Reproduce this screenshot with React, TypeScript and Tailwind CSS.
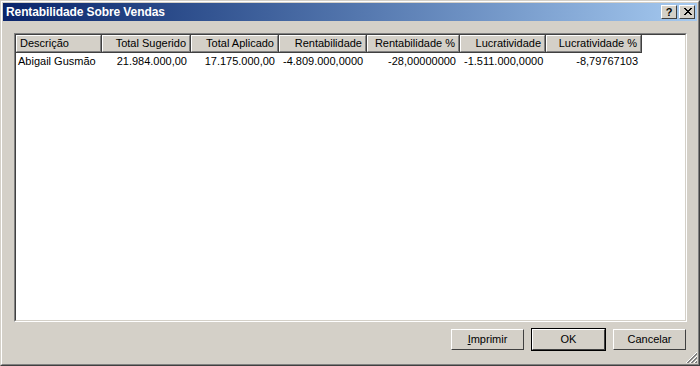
import React from "react";

const cols = [
  { label: "Descrição", w: 86, align: "left" },
  { label: "Total Sugerido", w: 89, align: "right" },
  { label: "Total Aplicado", w: 88, align: "right" },
  { label: "Rentabilidade", w: 88, align: "right" },
  { label: "Rentabilidade %", w: 93, align: "right" },
  { label: "Lucratividade", w: 86, align: "right" },
  { label: "Lucratividade %", w: 96, align: "right" },
];

const row = [
  "Abigail Gusmão",
  "21.984.000,00",
  "17.175.000,00",
  "-4.809.000,0000",
  "-28,00000000",
  "-1.511.000,0000",
  "-8,79767103",
];

function TitleButton({ children }: { children: React.ReactNode }) {
  return (
    <div className="w-[16px] h-[14px] bg-[#d4d0c8] border border-t-white border-l-white border-r-[#404040] border-b-[#404040] flex items-center justify-center text-black font-bold text-[11px] leading-none">
      {children}
    </div>
  );
}

function Button({ children, isDefault }: { children: React.ReactNode; isDefault?: boolean }) {
  return (
    <div className={isDefault ? "border border-black" : "border border-transparent"}>
      <div className="w-[73px] h-[21px] bg-[#d4d0c8] border border-t-white border-l-white border-r-[#404040] border-b-[#404040] flex items-center justify-center text-[11px] text-black">
        {children}
      </div>
    </div>
  );
}

export default function App() {
  return (
    <div
      className="w-[700px] h-[366px] bg-[#d4d0c8] border border-t-[#d4d0c8] border-l-[#d4d0c8] border-r-[#404040] border-b-[#404040] text-black"
      style={{ fontFamily: '"Liberation Sans", Arial, sans-serif' }}
    >
      <div className="h-full border border-t-white border-l-white border-r-[#808080] border-b-[#808080] p-[1px] flex flex-col relative">
        {/* title bar */}
        <div className="h-[18px] bg-gradient-to-r from-[#0a246a] to-[#a6caf0] flex items-center justify-between pl-[3px] pr-[2px]">
          <span className="text-white font-bold text-[12px] tracking-[-0.1px]">Rentabilidade Sobre Vendas</span>
          <div className="flex gap-[2px]">
            <TitleButton>?</TitleButton>
            <TitleButton>
              <svg width="9" height="8" viewBox="0 0 9 8">
                <path d="M1 0L8 7M2 0L9 7M8 0L1 7M9 0L2 7" stroke="black" strokeWidth="1" />
              </svg>
            </TitleButton>
          </div>
        </div>

        <div className="flex-1 flex flex-col pl-[11px] pr-[10px] pt-[12px] pb-[12px]">
          {/* list view */}
          <div className="flex-1 border border-t-[#808080] border-l-[#808080] border-r-white border-b-white">
            <div className="h-full border border-t-[#404040] border-l-[#404040] border-r-[#d4d0c8] border-b-[#d4d0c8] bg-white">
              <div className="flex">
                {cols.map((c) => (
                  <div
                    key={c.label}
                    style={{ width: c.w }}
                    className="h-[18px] bg-[#d4d0c8] border-r border-b border-r-[#404040] border-b-[#404040] shrink-0"
                  >
                    <div
                      className={
                        "h-full border-t border-l border-t-white border-l-white border-r border-b border-r-[#808080] border-b-[#808080] flex items-center px-[3px] text-[11px] " +
                        (c.align === "left" ? "justify-start" : "justify-end")
                      }
                    >
                      {c.label}
                    </div>
                  </div>
                ))}
              </div>
              <div className="flex h-[17px] items-center">
                {cols.map((c, i) => (
                  <div
                    key={c.label}
                    style={{ width: c.w }}
                    className={
                      "shrink-0 px-[4px] text-[11px] whitespace-nowrap " +
                      (c.align === "left" ? "text-left pl-[2px]" : "text-right")
                    }
                  >
                    {row[i]}
                  </div>
                ))}
              </div>
            </div>
          </div>

          {/* buttons */}
          <div className="flex justify-end gap-[6px] mt-[6px]">
            <Button>
              <span>
                <span className="underline">I</span>mprimir
              </span>
            </Button>
            <Button isDefault>OK</Button>
            <Button>Cancelar</Button>
          </div>
        </div>

        {/* resize grip */}
        <svg className="absolute right-0 bottom-0" width="13" height="13" viewBox="0 0 13 13">
          <path d="M12 1L1 12M12 5L5 12M12 9L9 12" stroke="white" strokeWidth="1" />
          <path d="M12 2L2 12M12 3L3 12M12 6L6 12M12 7L7 12M12 10L10 12M12 11L11 12" stroke="#808080" strokeWidth="1" />
        </svg>
      </div>
    </div>
  );
}
